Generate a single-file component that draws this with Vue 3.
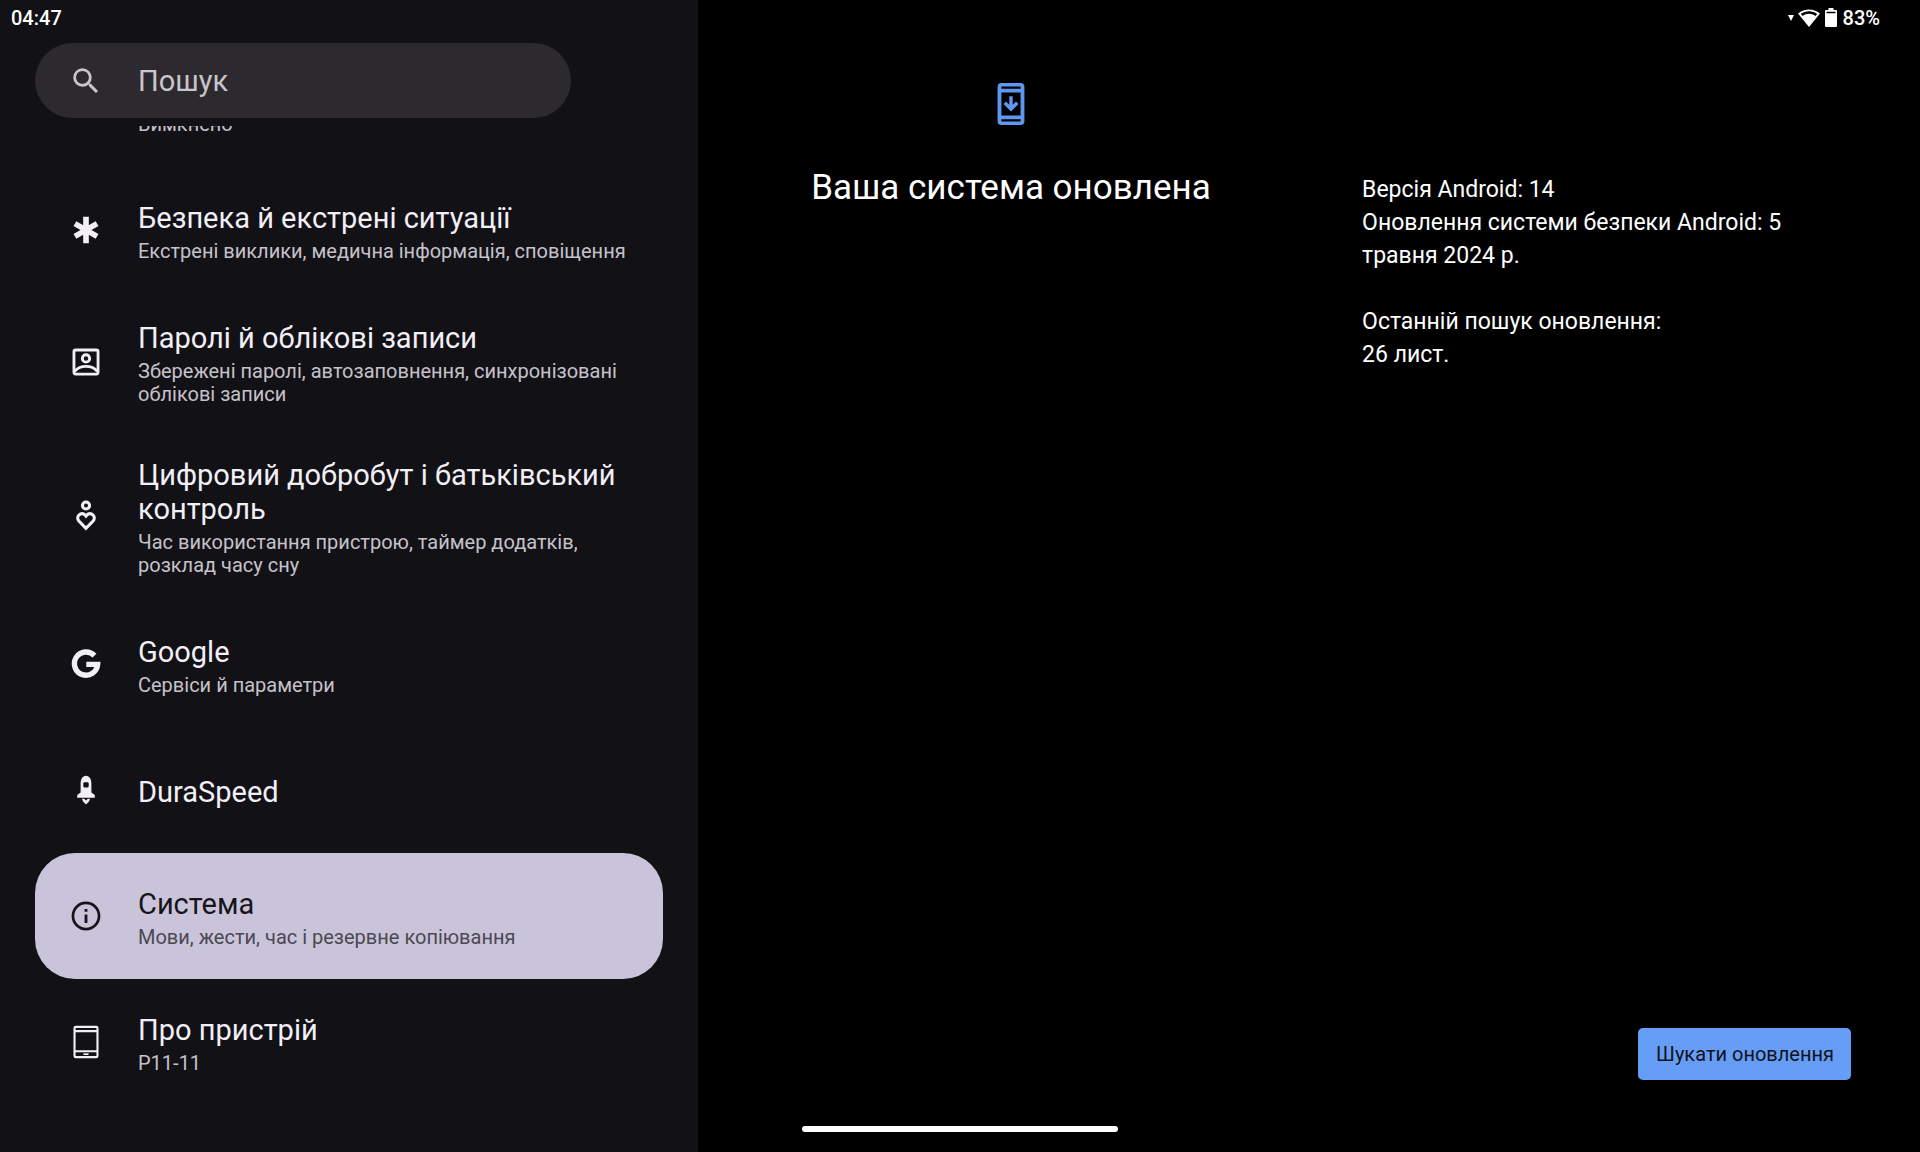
<script setup>
const items = [
  { id: 'safety', title: 'Безпека й екстрені ситуації', note: 'Екстрені виклики, медична інформація, сповіщення' },
  { id: 'accounts', title: 'Паролі й облікові записи', note: 'Збережені паролі, автозаповнення, синхронізовані облікові записи' },
  { id: 'wellbeing', title: 'Цифровий добробут і батьківський контроль', note: 'Час використання пристрою, таймер додатків, розклад часу сну' },
  { id: 'google', title: 'Google', note: 'Сервіси й параметри' },
  { id: 'duraspeed', title: 'DuraSpeed', note: '' },
  { id: 'system', title: 'Система', note: 'Мови, жести, час і резервне копіювання' },
  { id: 'about', title: 'Про пристрій', note: 'P11-11' },
]
const selected = 'system'
</script>

<template>
  <div class="screen">
    <aside class="menu">
      <div class="status"><time>04:47</time></div>
      <label class="search">
        <svg class="icon" viewBox="0 0 24 24" aria-hidden="true">
          <path fill="currentColor" d="M15.5 14h-.79l-.28-.27A6.47 6.47 0 0 0 16 9.5 6.5 6.5 0 1 0 9.5 16c1.61 0 3.09-.59 4.23-1.57l.27.28v.79l5 4.99L20.49 19l-4.99-5zm-6 0C7.01 14 5 11.99 5 9.5S7.01 5 9.5 5 14 7.01 14 9.5 11.99 14 9.5 14z" />
        </svg>
        <input type="search" placeholder="Пошук" aria-label="Пошук" />
      </label>

      <nav class="list">
        <div class="scrolled"><span class="note">Вимкнено</span></div>
        <a
          v-for="item in items"
          :key="item.id"
          href="#"
          class="row"
          :class="{ active: item.id === selected }"
        >
          <svg class="icon" viewBox="0 0 24 24" aria-hidden="true">
            <path v-if="item.id === 'safety'" fill="none" stroke="currentColor" stroke-width="4" d="M12 2.700v18.600M4.200 7.500l15.600 9M19.800 7.500l-15.600 9" />
            <g v-else-if="item.id === 'accounts'" fill="none" stroke="currentColor" stroke-width="2">
              <rect x="3.500" y="3.500" width="17" height="17" rx="1.200" />
              <circle cx="12" cy="9.500" r="2.600" />
              <path d="M4 18.500c2-2.300 4.800-3.400 8-3.400s6 1.100 8 3.400" />
            </g>
            <g v-else-if="item.id === 'wellbeing'" fill="none" stroke="currentColor" stroke-width="2.200">
              <circle cx="12" cy="4.600" r="2.500" />
              <path d="M12 20.700L7 15.500C4.300 12.500 8.600 8.400 11.500 11.400L12 12L12.500 11.400C15.400 8.400 19.700 12.500 17 15.500z" />
            </g>
            <path v-else-if="item.id === 'google'" fill="none" stroke="currentColor" stroke-width="3.800" d="M18 6.100A8.200 8.200 0 1 0 20.200 12.300H12.200" />
            <g v-else-if="item.id === 'duraspeed'">
              <path fill="currentColor" fill-rule="evenodd" d="M12 1.900c-2.600 0-3.800 2.700-3.800 5.600v6.200L5.800 15.600v1.800h12.400v-1.800l-2.400-1.900V7.500c0-2.900-1.200-5.600-3.800-5.600zM10.900 6.600h2.200q.8 0 .8.800v2q0 .8-.8.800h-2.200q-.8 0-.8-.8v-2q0-.8.800-.8z" />
              <path fill="currentColor" d="M9.100 18.200h1.600l1.300 1.200 1.300-1.200h1.600l-.8 1.900L12 22.300l-2.100-2.200z" />
            </g>
            <g v-else-if="item.id === 'system'">
              <circle cx="12" cy="12" r="9.200" fill="none" stroke="currentColor" stroke-width="1.900" />
              <path fill="currentColor" d="M11 7h2v2h-2zM11 11h2v6h-2z" />
            </g>
            <g v-else>
              <path fill="none" stroke="currentColor" stroke-width="1.500" d="M4.800 1.300h14.400q.9 0 .9.900v19.600q0 .9-.9.900H4.800q-.9 0-.9-.9V2.200q0-.9.900-.9zM3.900 4.300h16.200M3.900 18.500h16.200" />
              <path fill="currentColor" d="M10.200 20h3.600v1.200h-3.600z" />
            </g>
          </svg>
          <span class="text">
            <span class="title">{{ item.title }}</span>
            <span v-if="item.note" class="note">{{ item.note }}</span>
          </span>
        </a>
      </nav>
    </aside>

    <main class="detail">
      <div class="status right">
        <svg class="arrow" viewBox="0 0 6 6" aria-hidden="true"><path fill="currentColor" d="M0 0h6L3 6z" /></svg>
        <svg class="wifi" viewBox="0 0 22 18" aria-hidden="true">
          <path fill="currentColor" fill-rule="evenodd" d="M0 4.500C6.500-1 15.500-1 22 4.500L11 18zM2.800 4.900l1.700 2.100c4-3.100 9-3.100 13 0l1.700-2.100c-5-3.700-11.400-3.700-16.400 0z" />
        </svg>
        <svg class="battery" viewBox="0 0 12 19" aria-hidden="true">
          <path fill="currentColor" fill-rule="evenodd" d="M3.500 0h5v2H11q1 0 1 1v15q0 1-1 1H1q-1 0-1-1V3q0-1 1-1h2.500zM1.500 3.700v1.600h9V3.700z" />
        </svg>
        <span>83%</span>
      </div>

      <div class="columns">
        <header class="heading">
          <svg class="update" viewBox="0 0 24 24" aria-hidden="true">
            <path fill="currentColor" fill-rule="evenodd" d="M7 1h10q2 0 2 2v18q0 2-2 2H7q-2 0-2-2V3q0-2 2-2zm0 1.900v1.200h10V2.900zM7 6v12h10V6zm0 13.900v1.200h10v-1.200z" />
            <path fill="currentColor" d="M11.100 8h1.800v4.400l1.700-1.700 1.300 1.300-3.900 3.900L8.100 12l1.300-1.300 1.700 1.700z" />
          </svg>
          <h1>Ваша система оновлена</h1>
        </header>
        <section class="info">
          <p>Версія Android: 14<br />Оновлення системи безпеки Android: 5 травня 2024 р.</p>
          <p>Останній пошук оновлення:<br />26 лист.</p>
        </section>
      </div>

      <footer class="actions">
        <button type="button">Шукати оновлення</button>
      </footer>
    </main>

    <div class="home-bar"></div>
  </div>
</template>

<style>
body {
  margin: 0;
  background: #000;
}
</style>

<style scoped>
.screen {
  position: relative;
  display: grid;
  grid-template-columns: 4fr 7fr;
  min-height: 100vh;
  font-family: Roboto, "Noto Sans", sans-serif;
  color: #fff;
}

.menu {
  box-sizing: border-box;
  padding: 0 35px;
  background: #121116;
}

.status {
  display: flex;
  align-items: center;
  height: 35px;
  margin: 0 0 8px -24px;
  font-size: 20px;
  font-weight: 500;
}

.status.right {
  justify-content: flex-end;
  margin: 0 40px 0 0;
}

.arrow {
  width: 6px;
  height: 6px;
  margin-right: 4px;
}

.wifi {
  width: 22px;
  height: 18px;
  margin-right: 5px;
}

.battery {
  width: 12px;
  height: 19px;
  margin-right: 6px;
}

.icon {
  flex: none;
  width: 34px;
  height: 34px;
}

.search {
  display: flex;
  align-items: center;
  gap: 35px;
  box-sizing: border-box;
  height: 75px;
  margin-right: 92px;
  padding: 0 34px;
  border-radius: 38px;
  background: #2c2a2f;
  color: #c9c5cc;
}

.search input {
  flex: 1;
  min-width: 0;
  padding: 0;
  border: 0;
  outline: 0;
  background: none;
  color: inherit;
  font: inherit;
  font-size: 29px;
}

.search input::placeholder {
  color: inherit;
  opacity: 1;
}

.list {
  margin-top: 8px;
}

/* Row that has scrolled under the search bar; only its lower part shows. */
.scrolled {
  display: flex;
  align-items: flex-end;
  box-sizing: border-box;
  height: 41px;
  padding: 0 34px 31px 103px;
  overflow: clip;
}

.row {
  display: flex;
  align-items: center;
  gap: 35px;
  box-sizing: border-box;
  min-height: 126px;
  padding: 24px 34px;
  border-radius: 40px;
  color: #f3eff6;
  text-decoration: none;
}

.text {
  display: flex;
  flex-direction: column;
  gap: 5px;
  padding-top: 4px;
}

.title {
  font-size: 29px;
  line-height: 34px;
}

.note {
  font-size: 20px;
  line-height: 23px;
  color: #c6c2ca;
}

.active {
  background: #cac4da;
  color: #17151b;
}

.active .note {
  color: #4b4853;
}

.detail {
  display: flex;
  flex-direction: column;
}

.columns {
  display: grid;
  grid-template-columns: 119fr 100fr;
}

.heading {
  justify-self: start;
  display: flex;
  flex-direction: column;
  align-items: center;
  padding: 46px 0 0 113px;
}

.update {
  width: 46px;
  height: 46px;
  color: #5f97f0;
}

h1 {
  margin: 40px 0 0;
  font-size: 35px;
  line-height: 42px;
  font-weight: 400;
}

.info {
  padding: 138px 69px 0 0;
  font-size: 23px;
  line-height: 33px;
}

.info p {
  margin: 0 0 33px;
}

.actions {
  display: flex;
  justify-content: flex-end;
  margin-top: auto;
  padding: 0 69px 72px 0;
}

button {
  padding: 14px 17px 14px 18px;
  border: 0;
  border-radius: 5px;
  background: #669df6;
  color: #10131c;
  font: inherit;
  font-size: 20px;
  line-height: 24px;
}

.home-bar {
  position: absolute;
  bottom: 20px;
  left: 50%;
  width: 316px;
  height: 6px;
  margin-left: -158px;
  border-radius: 3px;
  background: #fff;
}
</style>
